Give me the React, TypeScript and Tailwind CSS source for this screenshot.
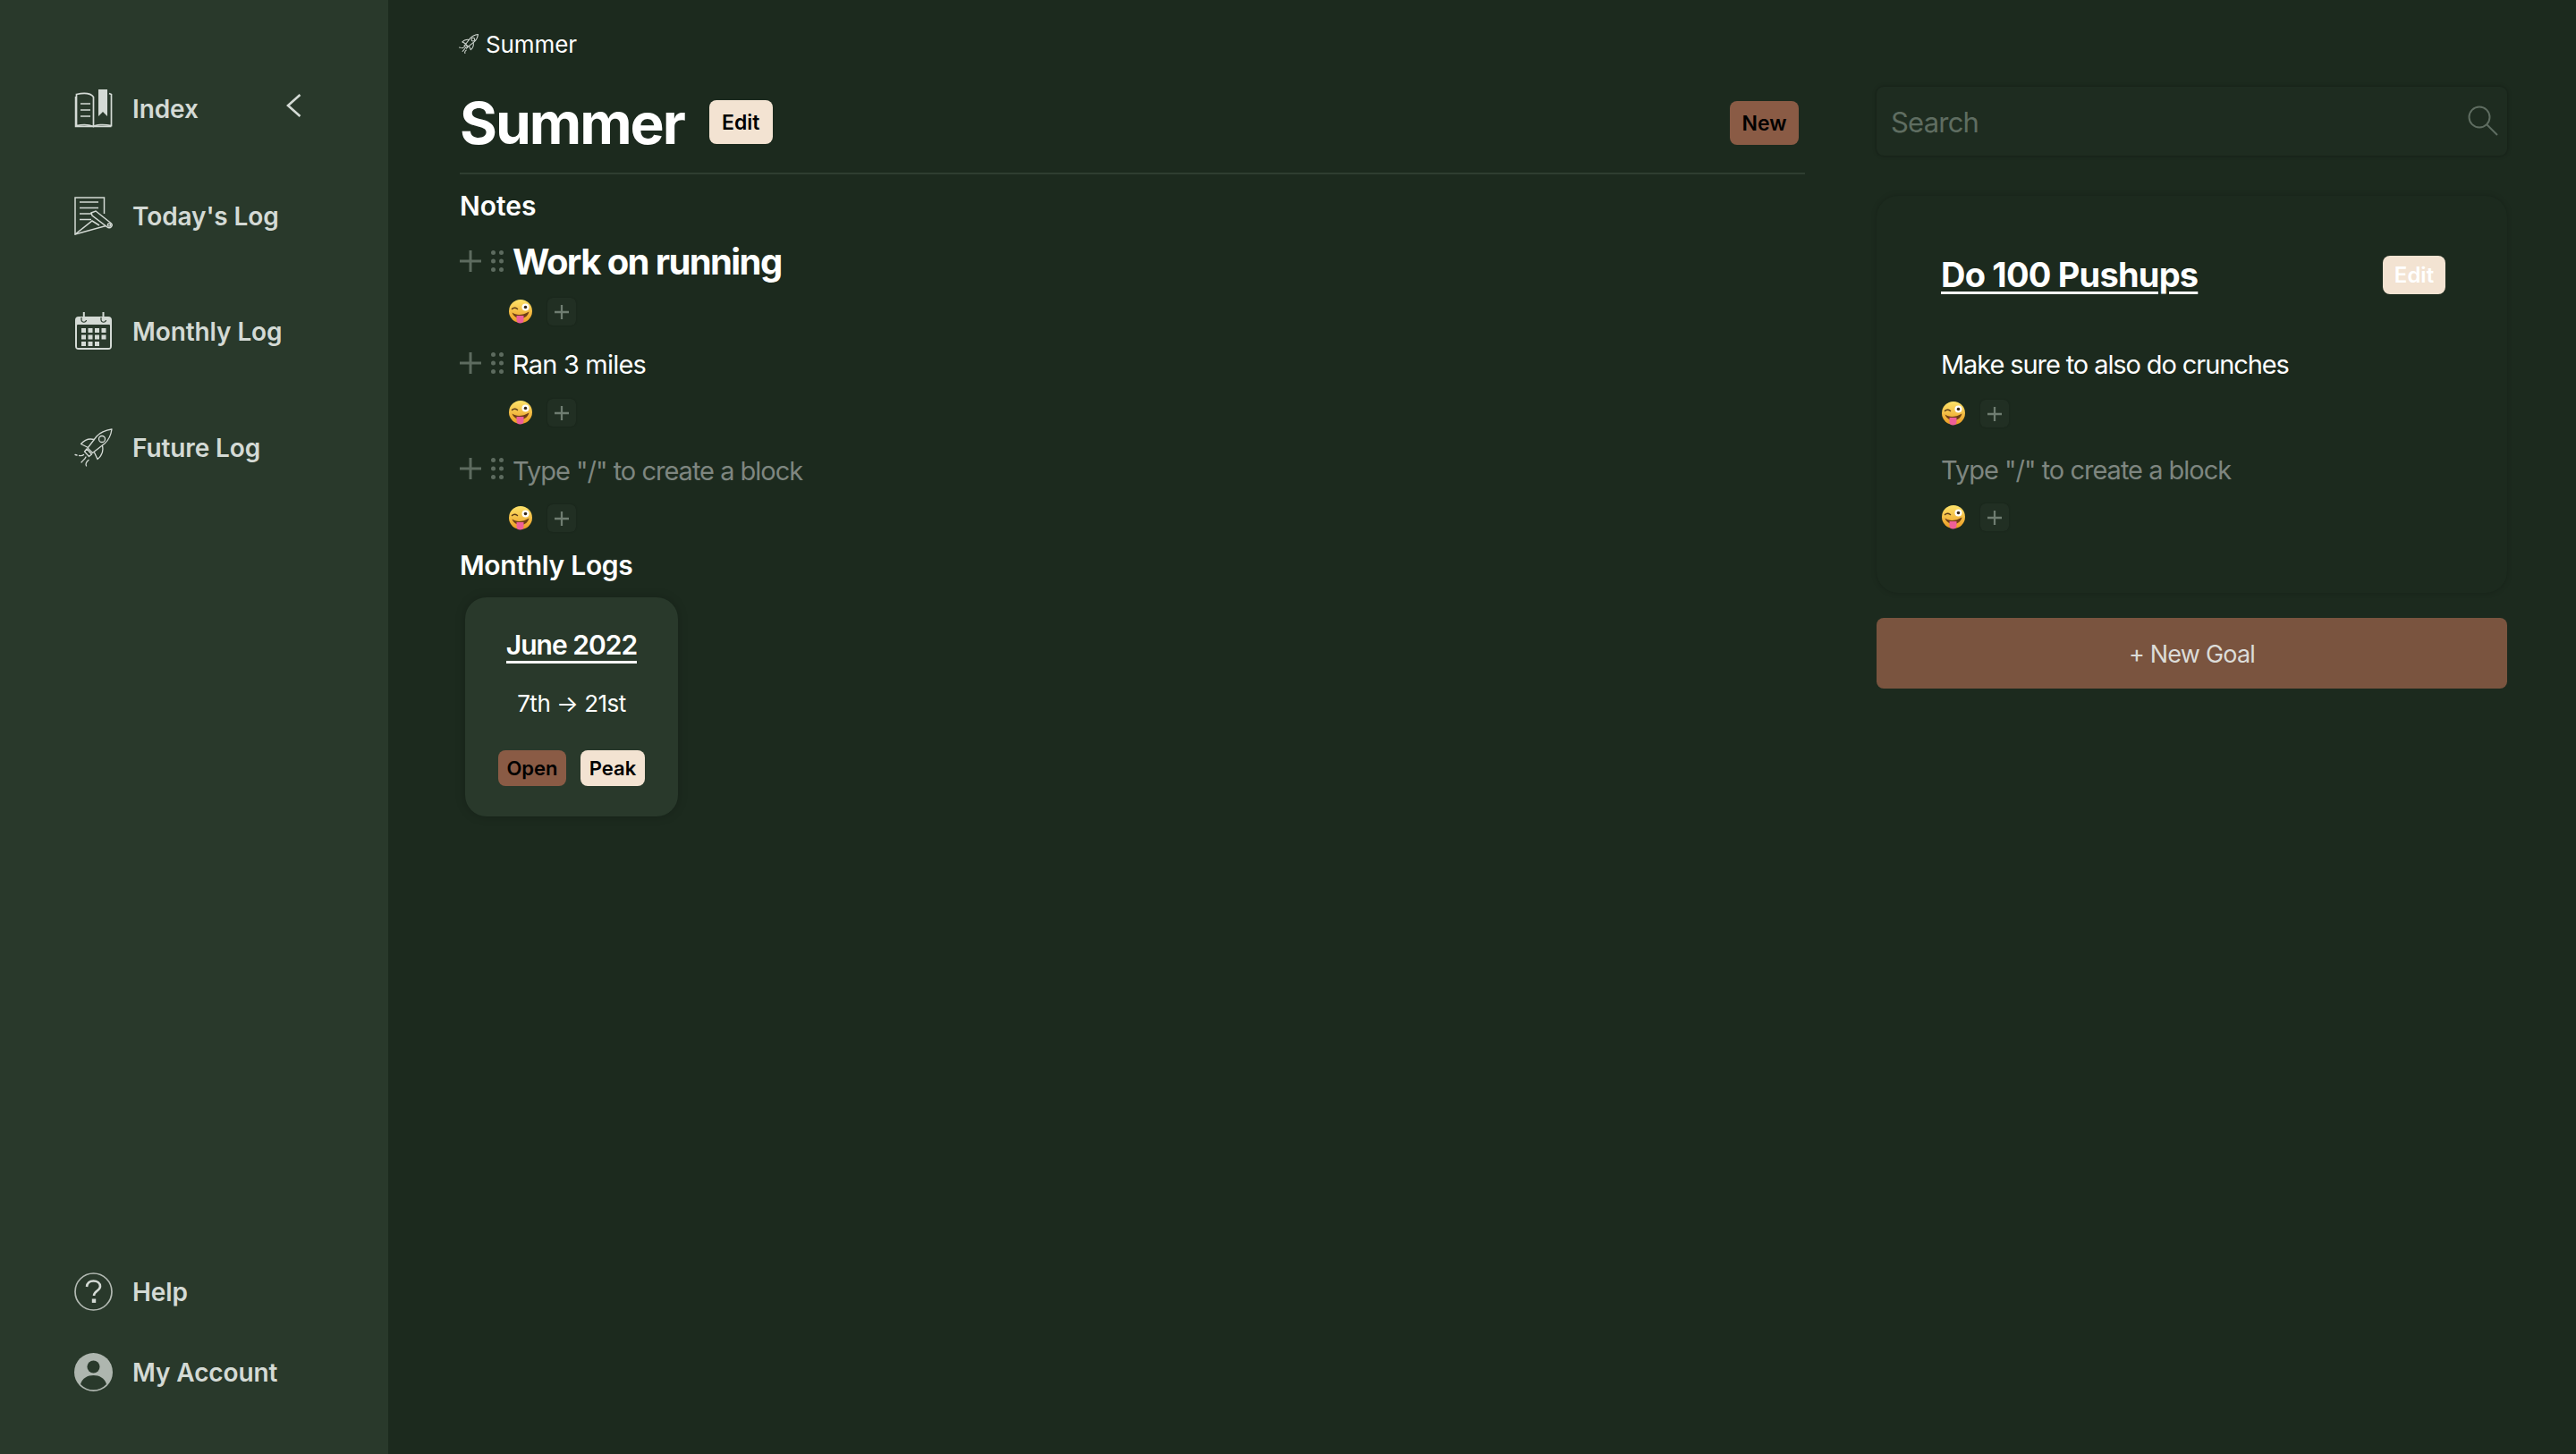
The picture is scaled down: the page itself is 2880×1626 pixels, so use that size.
const FONT = "font-['Inter',sans-serif]";

function BookIcon() {
  return (
    <svg width="43" height="43" viewBox="0 0 43 43" fill="none" stroke="currentColor" strokeWidth="1.7">
      <path d="M21.5 41V8.5C19 5 12 3.5 2.5 5.5V40.5C10 39 17 39.5 21.5 41.5C24 39.5 33 39 41.5 40.5V5.5L39 4.5" />
      <path d="M1.5 8V41.5H41.5" strokeWidth="1.5" />
      <path d="M7 16H18M7 23H18M7 30H18" />
      <path d="M27 0H37V30L32 25L27 30Z" fill="currentColor" stroke="none" />
    </svg>
  );
}

function LogIcon() {
  return (
    <svg width="43" height="43" viewBox="0 0 43 43" fill="none" stroke="currentColor" strokeWidth="1.5">
      <path d="M33.5 19V1H1V42L41 31" />
      <path d="M6 6H27M6 12.5H27M6 19H21M6 25.5H19" />
      <path d="M1 42L20 27L28 32" />
      <path d="M19 18L24 16L41 29.5A3 3 0 0 1 37 34L20 21Z" fill="#29392b" />
      <circle cx="39" cy="31.5" r="1.6" />
    </svg>
  );
}

function CalendarIcon() {
  const cells = [
    [8, 18], [15.5, 18], [23, 18], [30.5, 18],
    [8, 25.5], [15.5, 25.5], [23, 25.5], [30.5, 25.5],
    [8, 33], [15.5, 33], [23, 33],
  ];
  return (
    <svg width="43" height="43" viewBox="0 0 43 43" fill="currentColor">
      <path d="M3 5H38A4 4 0 0 1 42 9V38A4 4 0 0 1 38 42H5A4 4 0 0 1 1 38V9A4 4 0 0 1 5 5Z" />
      <rect x="3" y="14" width="37" height="26" rx="1" fill="#29392b" />
      {cells.map(([x, y]) => (
        <rect key={`${x}-${y}`} x={x} y={y} width="5" height="5" />
      ))}
      <path d="M8 6V9A2.8 2.8 0 0 0 13.5 9M30 6V9A2.8 2.8 0 0 0 35.5 9" fill="none" stroke="#29392b" strokeWidth="1.2" />
      <rect x="9.8" y="0" width="2" height="8" />
      <rect x="31.5" y="0" width="2" height="8" />
    </svg>
  );
}

function RocketIcon({ size = 43, stroke = 1.3 }: { size?: number; stroke?: number }) {
  return (
    <svg width={size} height={size} viewBox="0 0 43 43" fill="none" stroke="currentColor" strokeWidth={stroke} strokeLinecap="round" strokeLinejoin="round">
      <path d="M42 1C35 2 29 4.5 25 9L15 22L20.5 27.5L34 17C38.5 13 41 8 42 1Z" />
      <circle cx="31" cy="12" r="3.5" />
      <path d="M22 12.5C16 11 11 13.5 7.5 17.5L14.5 21" />
      <path d="M31.5 19.5C33 26 30.5 31 26 34.5L22.5 27" />
      <path d="M14 23L19.5 29L16.5 31.5L11.5 26Z" />
      <path d="M1 29.5L3 30M5.5 30.5C8 31 9.5 30.5 10.5 29.5" />
      <path d="M8 38C9.5 36 12 34.5 13 32" />
      <path d="M13.5 42C12.5 40 13.5 37.5 16 35.5" />
    </svg>
  );
}

function HelpIcon() {
  return (
    <svg width="43" height="43" viewBox="0 0 43 43" fill="none" stroke="currentColor">
      <circle cx="21.5" cy="21.5" r="20.5" strokeWidth="1.7" opacity="0.8" />
      <path d="M14 16C14.5 11.5 17.5 9.5 21.5 9.5C26 9.5 29 12 29 15.5C29 20.5 22 20.5 22 26" strokeWidth="2.6" />
      <rect x="19.8" y="29.5" width="4.4" height="4.4" fill="currentColor" stroke="none" />
    </svg>
  );
}

function AccountIcon() {
  return (
    <svg width="43" height="43" viewBox="0 0 43 43">
      <circle cx="21.5" cy="21.5" r="21.5" fill="#aeb6af" />
      <circle cx="21.5" cy="15.5" r="7" fill="#29392b" />
      <path d="M7 35C9 28 15 25 21.5 25C28 25 34 28 36 35C32 39 27 41.3 21.5 41.3C16 41.3 11 39 7 35Z" fill="#29392b" />
    </svg>
  );
}

function WinkEmoji({ id }: { id: string }) {
  return (
    <svg width="26" height="27" viewBox="0 0 26 27" className="shrink-0">
      <defs>
        <linearGradient id={id} x1="0" y1="0" x2="0" y2="1">
          <stop offset="0" stopColor="#fde36a" />
          <stop offset="1" stopColor="#eb9a22" />
        </linearGradient>
      </defs>
      <circle cx="13" cy="13" r="13" fill={`url(#${id})`} />
      <path d="M3.5 10.5C5 9 7.5 9 9.5 10.5" fill="none" stroke="#5b3a17" strokeWidth="1.5" strokeLinecap="round" />
      <circle cx="18.5" cy="8.5" r="4" fill="#fff" />
      <circle cx="18.5" cy="8.5" r="1.8" fill="#3a2a18" />
      <path d="M3.5 14.5C8 18 15 18 22.5 13.5C21.5 18 18 21 13 21C8.5 21 5 18.5 3.5 14.5Z" fill="#6e3d16" />
      <path d="M8.5 18H16.5V22.5A4 4 0 0 1 8.5 22.5Z" fill="#ee5f98" />
    </svg>
  );
}

function PlusLines({ size, stroke }: { size: number; stroke: number }) {
  return (
    <svg width={size} height={size} viewBox="0 0 24 24" stroke="currentColor" strokeWidth={stroke}>
      <path d="M12 0V24M0 12H24" />
    </svg>
  );
}

function Reactions({ id }: { id: string }) {
  return (
    <div className="flex items-center gap-[17px]">
      <WinkEmoji id={id} />
      <div className="w-[32px] h-[31px] flex items-center justify-center rounded-[6px] bg-[#212f23] text-[#6f7d71] shadow-[0_0_2px_rgba(0,0,0,0.25)]">
        <PlusLines size={16} stroke={3.4} />
      </div>
    </div>
  );
}

function Block({ id, text, className, height, handleTop }: { id: string; text: string; className: string; height: string; handleTop: string }) {
  return (
    <div>
      <div className={`flex items-start ${height}`}>
        <div className={`w-[60px] shrink-0 flex items-start text-[#5d6b5f] ${handleTop}`}>
          <PlusLines size={24} stroke={3} />
          <svg width="14" height="24" viewBox="0 0 14 24" fill="currentColor" className="ml-[11px]">
            <circle cx="2.5" cy="2.5" r="2.5" /><circle cx="11.5" cy="2.5" r="2.5" />
            <circle cx="2.5" cy="12" r="2.5" /><circle cx="11.5" cy="12" r="2.5" />
            <circle cx="2.5" cy="21.5" r="2.5" /><circle cx="11.5" cy="21.5" r="2.5" />
          </svg>
        </div>
        <span className={className}>{text}</span>
      </div>
      <div className="pl-[55px]">
        <Reactions id={id} />
      </div>
    </div>
  );
}

function NavItem({ icon, label, className }: { icon: React.ReactNode; label: string; className?: string }) {
  return (
    <div className={`flex items-center gap-[22px] h-[43px] text-[28px] font-semibold tracking-[-0.1px] text-[#d4dad5] ${className ?? ""}`}>
      <span className="shrink-0 w-[43px] h-[43px]">{icon}</span>
      {label}
    </div>
  );
}

function Chip({ label, className }: { label: string; className: string }) {
  return (
    <span className={`inline-flex items-center justify-center rounded-[8px] font-semibold ${className}`}>{label}</span>
  );
}

export default function App() {
  return (
    <div className={`flex h-[1626px] w-[2880px] overflow-hidden bg-[#1c2a1e] ${FONT}`}>
      <aside className="w-[434px] shrink-0 bg-[#29392b] pl-[83px] pt-[100px] pb-[70px] flex flex-col justify-between">
        <nav>
          <div className="flex items-start">
            <NavItem icon={<BookIcon />} label="Index" className="w-[237px]" />
            <svg width="17" height="26" viewBox="0 0 17 26" fill="none" stroke="#d4dad5" strokeWidth="2.6" className="mt-[5px]">
              <path d="M15.5 1L2 13L15.5 25" />
            </svg>
          </div>
          <NavItem icon={<LogIcon />} label="Today's Log" className="mt-[77px]" />
          <NavItem icon={<CalendarIcon />} label="Monthly Log" className="mt-[86px]" />
          <NavItem icon={<RocketIcon />} label="Future Log" className="mt-[87px]" />
        </nav>
        <div>
          <NavItem icon={<HelpIcon />} label="Help" />
          <NavItem icon={<AccountIcon />} label="My Account" className="mt-[47px]" />
        </div>
      </aside>

      <main className="w-[1504px] ml-[80px] shrink-0 pt-[33px]">
        <div className="flex items-center h-[32px] text-[26px] text-white tracking-[-0.1px]">
          <span className="text-[#d4dad5] mr-[8px] -ml-[1px]"><RocketIcon size={22} stroke={2} /></span>
          Summer
        </div>
        <div className="flex items-center justify-between mt-[47px] h-[49px] pr-[7px]">
          <div className="flex items-center">
            <h1 className="mt-[3px] text-[64px] font-bold text-white leading-none tracking-[-2px]">Summer</h1>
            <Chip label="Edit" className="ml-[28px] w-[71px] h-[49px] pt-[2px] bg-[#f3e3d2] text-black text-[23px]" />
          </div>
          <Chip label="New" className="mt-[2px] w-[77px] h-[49px] pt-[1px] bg-[#8a5b45] text-black text-[23px]" />
        </div>
        <div className="mt-[32px] border-t-2 border-[#2f3e31]" />
        <h2 className="mt-[17px] text-[30px] font-semibold text-white leading-[36px]">Notes</h2>
        <div className="mt-[32px]">
          <Block id="wink-a" text="Work on running" height="h-[53px]" handleTop="pt-0" className="-ml-[1px] text-[40px] font-bold text-white leading-[26px] tracking-[-1.6px]" />
          <div className="mt-[26px]">
            <Block id="wink-b" text="Ran 3 miles" height="h-[56px]" handleTop="pt-[4px]" className="-ml-[1px] text-[29px] text-white leading-[36px] tracking-[-0.8px]" />
          </div>
          <div className="mt-[32px]">
            <Block id="wink-c" text={'Type "/" to create a block'} height="h-[55px]" handleTop="pt-[3px]" className="-ml-[1px] text-[29px] text-[#7e8680] leading-[36px] tracking-[-1px]" />
          </div>
        </div>
        <h2 className="mt-[19px] text-[30px] font-semibold text-white leading-[36px] tracking-[-0.3px]">Monthly Logs</h2>
        <div className="mt-[18px] ml-[6px] w-[238px] h-[245px] rounded-[24px] bg-[#29392b] shadow-[0_0_12px_rgba(0,0,0,0.2)] flex flex-col items-center pt-[36px]">
          <span className="text-[30px] font-semibold text-white leading-[34px] tracking-[-1px] border-b-[3px] border-white pb-[1px]">June 2022</span>
          <span className="mt-[29px] text-[26px] text-white leading-[32px] tracking-[-0.5px]">7th → 21st</span>
          <div className="mt-[36px] flex gap-[16px]">
            <Chip label="Open" className="w-[76px] h-[40px] bg-[#8a5b45] text-black text-[22px]" />
            <Chip label="Peak" className="w-[72px] h-[40px] bg-[#f3e3d2] text-black text-[22px]" />
          </div>
        </div>
      </main>

      <section className="w-[705px] ml-[80px] shrink-0 pt-[97px]">
        <div className="h-[77px] rounded-[8px] bg-[#1e2c20] shadow-[0_0_4px_rgba(0,0,0,0.35)] flex items-center justify-between pl-[16px] pr-[10px]">
          <span className="pt-[3px] text-[31px] text-[#5f6d61] tracking-[-0.8px]">Search</span>
          <svg width="34" height="34" viewBox="0 0 34 34" fill="none" stroke="#5f6d61" strokeWidth="2" className="-mt-[2px]">
            <circle cx="13" cy="13" r="11.5" />
            <path d="M21 21L33 33" />
          </svg>
        </div>
        <div className="mt-[45px] h-[444px] rounded-[24px] bg-[#1c2a1e] shadow-[0_0_6px_rgba(0,0,0,0.2)] pl-[72px] pr-[69px] pt-[67px]">
          <div className="flex items-center justify-between h-[43px]">
            <span className="text-[38px] font-bold text-white tracking-[-0.8px] underline underline-offset-[5px] decoration-[3px]">Do 100 Pushups</span>
            <Chip label="Edit" className="w-[70px] h-[43px] bg-[#f3e3d2] text-white text-[24px] font-medium" />
          </div>
          <p className="mt-[61px] text-[29px] text-white leading-[36px] tracking-[-1.1px]">Make sure to also do crunches</p>
          <div className="mt-[21px] pl-[1px]"><Reactions id="wink-d" /></div>
          <p className="mt-[30px] text-[29px] text-[#7e8680] leading-[36px] tracking-[-1px]">{'Type "/" to create a block'}</p>
          <div className="mt-[19px] pl-[1px]"><Reactions id="wink-e" /></div>
        </div>
        <button className="mt-[28px] w-full h-[79px] pt-[3px] rounded-[8px] bg-[#7a543f] text-[27px] text-[#dcdcd8] tracking-[-0.8px] flex items-center justify-center">
          + New Goal
        </button>
      </section>
    </div>
  );
}
